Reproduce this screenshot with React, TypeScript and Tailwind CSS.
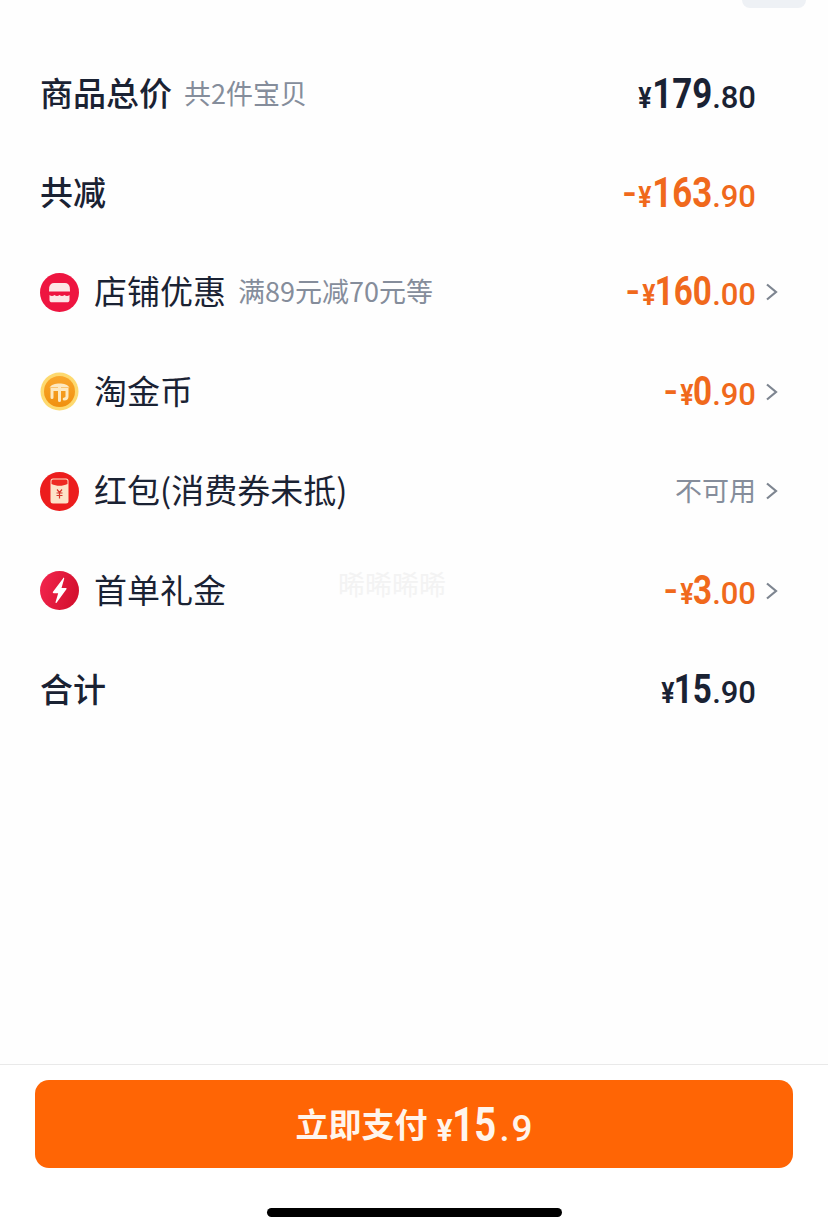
import type { ReactNode } from 'react';

const cjk = "font-['Noto_Sans_CJK_SC','Noto_Sans',sans-serif]";
const din = "font-['Roboto','Noto_Sans_CJK_SC',sans-serif]";

function Price({
  sign,
  whole,
  cents,
  color,
  size = 'text-[42px]',
  pull,
}: {
  sign?: boolean;
  whole: string;
  cents: string;
  color: string;
  size?: string;
  pull: string;
}) {
  return (
    <span className={`${din} ${color} flex items-baseline leading-none`}>
      {sign && <span className="mr-[2px] text-[40px] font-medium">-</span>}
      <span className="-ml-[2px] inline-block origin-right scale-x-[.85] text-[29px] font-bold">¥</span>
      <span className={`${size} ${pull} inline-block origin-right scale-x-[.83] font-bold`}>{whole}</span>
      <span className="text-[31px] font-medium">.</span>
      <span className="text-[31px] font-medium">{cents}</span>
    </span>
  );
}

function Row({
  icon,
  label,
  bold,
  note,
  value,
  arrow,
}: {
  icon?: ReactNode;
  label: string;
  bold?: boolean;
  note?: string;
  value: ReactNode;
  arrow?: boolean;
}) {
  return (
    <div className="flex h-[99.4px] items-center pl-[40px] pr-[46px]">
      {icon && <div className="mr-[15px] h-[39px] w-[39px] shrink-0">{icon}</div>}
      <span
        className={`${cjk} -mt-[3px] text-[33px] leading-none text-[#1a2233] ${bold ? 'font-medium' : 'font-normal'}`}
      >
        {label}
      </span>
      {note && <span className={`${cjk} -mt-[3px] ml-[12px] text-[27px] leading-none text-[#858d9b]`}>{note}</span>}
      <div className="ml-auto flex items-center">
        {value}
        <div className="w-[26px] shrink-0">
          {arrow && (
            <svg viewBox="0 0 14 20" className="ml-[9px] h-[20px] w-[14px]">
              <path d="M2 2.500l9 7.500-9 7.500" fill="none" stroke="#7d8590" strokeWidth="2.200" />
            </svg>
          )}
        </div>
      </div>
    </div>
  );
}

const ShopIcon = (
  <svg viewBox="0 0 39 39" className="h-full w-full">
    <circle cx="19.500" cy="19.500" r="19.500" fill="#ee1540" />
    <path d="M14 10h11c2.600 0 4.500 1.800 4.800 4.500l.2 4H9l.2-4C9.500 11.800 11.400 10 14 10z" fill="#fde6e6" />
    <path
      d="M9.500 22c1.700 1.400 3.300 1.400 5 0 1.700 1.400 3.300 1.400 5 0 1.700 1.400 3.300 1.400 5 0 1.700 1.400 3.300 1.400 5 0v5c0 1.400-1 2.300-2.500 2.300H12c-1.500 0-2.500-.9-2.500-2.300z"
      fill="#fde6e6"
    />
  </svg>
);

const CoinIcon = (
  <svg viewBox="0 0 39 39" className="h-full w-full">
    <defs>
      <linearGradient id="coin" x1="0" y1="0" x2="0" y2="1">
        <stop offset="0" stopColor="#f9a62b" />
        <stop offset="1" stopColor="#f0900f" />
      </linearGradient>
    </defs>
    <circle cx="19.500" cy="19.500" r="19" fill="#fdd96f" />
    <circle cx="19.500" cy="19.500" r="15.500" fill="url(#coin)" />
    <path d="M9.500 15.500c3-5.500 17-5.500 20 0z" fill="#fde9c0" />
    <path
      d="M12 18.500v7M12 18v-.5h15v7c0 1.600-1 2.500-2.800 2.500M19.500 15v13.500"
      fill="none"
      stroke="#fde9c0"
      strokeWidth="3"
      strokeLinecap="round"
    />
  </svg>
);

const RedPacketIcon = (
  <svg viewBox="0 0 39 39" className="h-full w-full">
    <circle cx="19.500" cy="19.500" r="19.500" fill="#ec1d1d" />
    <rect x="10.500" y="6.500" width="18" height="25" rx="2.500" fill="#fde3c8" />
    <path d="M11.500 9a1.500 1.500 0 0 1 1.500-1.500h13a1.500 1.500 0 0 1 1.500 1.500v3c-5 2.400-11 2.400-16 0z" fill="#ee2a22" />
    <path
      d="M17 17.500l2.500 3 2.500-3M16.500 21h6M16.500 23.500h6M19.500 20.500v6"
      fill="none"
      stroke="#d8362b"
      strokeWidth="1.200"
    />
  </svg>
);

const BoltIcon = (
  <svg viewBox="0 0 39 39" className="h-full w-full">
    <defs>
      <linearGradient id="bolt" x1="0" y1="0" x2="1" y2="0.300">
        <stop offset="0" stopColor="#f4264f" />
        <stop offset="1" stopColor="#d5112f" />
      </linearGradient>
    </defs>
    <circle cx="19.500" cy="19.500" r="19.500" fill="url(#bolt)" />
    <path d="M23 7.500L13 20.800c-.5.700-.1 1.400.7 1.400h4.500l-2.700 9.100c-.2.800.6 1.100 1.100.5l9.800-13.500c.5-.7.100-1.300-.7-1.300h-4.200l2.700-9.200c.2-.8-.7-1.400-1.200-.8z" fill="#fff" />
  </svg>
);

export default function App() {
  return (
    <div className="relative flex h-[1232px] w-[828px] flex-col overflow-hidden bg-[#fefefe]">
      {/* Clipped header */}
      <div className="flex h-[44px] shrink-0 justify-end pr-[22px]">
        <div className="h-[8px] w-[64px] rounded-b-[10px] bg-[#eef1f5]" />
      </div>

      <Row
        label="商品总价"
        bold
        note="共2件宝贝"
        value={<Price whole="179" cents="80" color="text-[#1a2233]" pull="-ml-[12px]" />}
      />
      <Row
        label="共减"
        bold
        value={<Price sign whole="163" cents="90" color="text-[#f0691c]" pull="-ml-[12px]" />}
      />
      <Row
        icon={ShopIcon}
        label="店铺优惠"
        note="满89元减70元等"
        arrow
        value={<Price sign whole="160" cents="00" color="text-[#f0691c]" size="text-[40px]" pull="-ml-[12px]" />}
      />
      <Row
        icon={CoinIcon}
        label="淘金币"
        arrow
        value={<Price sign whole="0" cents="90" color="text-[#f0691c]" size="text-[40px]" pull="-ml-[4px]" />}
      />
      <Row
        icon={RedPacketIcon}
        label="红包(消费券未抵)"
        arrow
        value={<span className={`${cjk} -mt-[3px] text-[27px] leading-none text-[#858d9b]`}>不可用</span>}
      />
      <Row
        icon={BoltIcon}
        label="首单礼金"
        arrow
        value={<Price sign whole="3" cents="00" color="text-[#f0691c]" size="text-[40px]" pull="-ml-[4px]" />}
      />
      <Row
        label="合计"
        bold
        value={<Price whole="15" cents="90" color="text-[#1a2233]" size="text-[40px]" pull="-ml-[8px]" />}
      />

      {/* Watermark */}
      <span className={`${cjk} absolute left-[338px] top-[570px] text-[27px] leading-none text-[#f3f3f3]`}>
        晞晞晞晞
      </span>

      {/* Footer */}
      <div className="mt-auto flex h-[168px] shrink-0 flex-col items-center border-t border-[#e9e9e9] bg-white pt-[15px]">
        <button className="flex h-[88px] w-[758px] items-center justify-center rounded-[14px] bg-[#ff6505] text-[#fff5ec]">
          <span className={`${cjk} -mt-[1px] text-[33px] font-bold leading-none`}>立即支付</span>
          <span className={`${din} ml-[8px] flex items-baseline font-bold leading-none`}>
            <span className="inline-block origin-right scale-x-[.95] text-[31px]">¥</span>
            <span className="-ml-[12px] inline-block origin-right scale-x-[.78] text-[49px]">15</span>
            <span className="ml-[3px] text-[36px] font-medium">.</span>
            <span className="ml-[2px] text-[37px] font-medium">9</span>
          </span>
        </button>
        <div className="mt-[40px] h-[9px] w-[295px] rounded-full bg-black" />
      </div>
    </div>
  );
}
